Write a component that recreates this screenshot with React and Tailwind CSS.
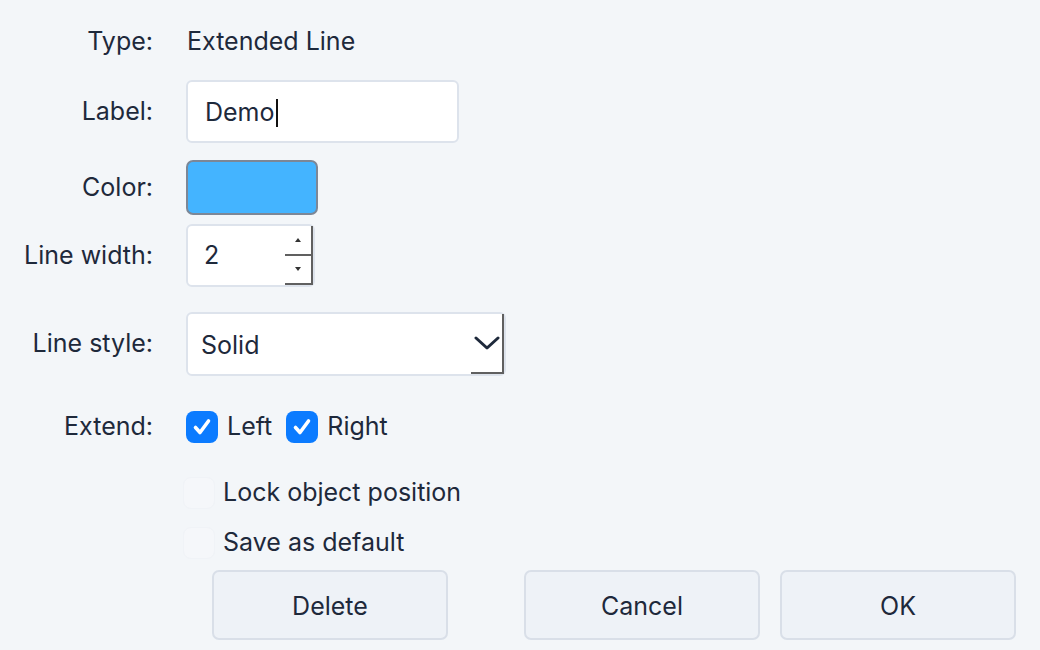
import React from 'react';

function CheckBox({ checked }) {
  if (!checked) {
    return <span className="w-[32px] h-[32px] rounded-[8px] bg-[#f5f7fa] border border-[#f0f3f7] shrink-0" />;
  }
  return (
    <span className="w-[32px] h-[32px] rounded-[8px] bg-[#0b7bff] flex items-center justify-center shrink-0">
      <svg width="20" height="20" viewBox="0 0 20 20" fill="none">
        <path d="M3.5 10.5 L8 15.5 L16.5 4" stroke="white" strokeWidth="3.6" strokeLinecap="round" strokeLinejoin="round" />
      </svg>
    </span>
  );
}

function Row({ label, className, children }) {
  return (
    <div className={`flex items-center ${className}`}>
      <div className="w-[153px] text-right shrink-0">{label}</div>
      <div className="ml-[33px] flex items-center">{children}</div>
    </div>
  );
}

export default function App() {
  return (
    <div
      className="w-[1040px] h-[650px] bg-[#f3f6f9] text-[#1e293b] text-[25px] overflow-hidden"
      style={{ fontFamily: 'Inter, "Noto Sans", sans-serif' }}
    >
      <div className="flex flex-col pt-[24px]">
        {/* Type */}
        <Row label="Type:" className="h-[36px]">
          <span className="ml-[1px]">Extended Line</span>
        </Row>

        {/* Label */}
        <Row label="Label:" className="mt-[20px] h-[63px]">
          <div className="w-[273px] h-[63px] bg-white border-2 border-[#dde3ec] rounded-[6px] flex items-center pl-[17px] pt-[2px]">
            <span>Demo</span>
            <span className="w-[2px] h-[28px] bg-[#111] ml-[1px]" />
          </div>
        </Row>

        {/* Color */}
        <Row label="Color:" className="mt-[17px] h-[55px]">
          <div className="w-[132px] h-[55px] bg-[#44b4ff] border-2 border-[#7c8797] rounded-[7px]" />
        </Row>

        {/* Line width */}
        <Row label="Line width:" className="mt-[9px] h-[63px]">
          <div className="w-[129px] h-[63px] bg-white border-2 border-[#dde3ec] rounded-[6px] flex">
            <span className="flex-1 flex items-center pl-[16px]">2</span>
            <div className="w-[28px] flex flex-col">
              <div className="flex-1 border-r-2 border-b-2 border-[#606060] flex items-center justify-center">
                <svg width="6" height="4" viewBox="0 0 6 4"><path d="M3 0 L6 4 L0 4 Z" fill="#333" /></svg>
              </div>
              <div className="flex-1 border-r-2 border-b-2 border-[#606060] flex items-center justify-center">
                <svg width="6" height="4" viewBox="0 0 6 4"><path d="M0 0 L6 0 L3 4 Z" fill="#333" /></svg>
              </div>
            </div>
          </div>
        </Row>

        {/* Line style */}
        <Row label="Line style:" className="mt-[25px] h-[64px]">
          <div className="w-[320px] h-[64px] bg-white border-2 border-[#dde3ec] rounded-[6px] flex">
            <span className="flex-1 flex items-center pl-[13px] pt-[3px]">Solid</span>
            <div className="w-[33px] border-r-2 border-b-2 border-[#606060] flex items-center justify-center">
              <svg width="26" height="16" viewBox="0 0 26 16" fill="none">
                <path d="M2 3 L13 13 L24 3" stroke="#1e293b" strokeWidth="3" strokeLinecap="round" strokeLinejoin="round" />
              </svg>
            </div>
          </div>
        </Row>

        {/* Extend */}
        <Row label="Extend:" className="mt-[35px] h-[32px]">
          <CheckBox checked />
          <span className="ml-[9px]">Left</span>
          <span className="ml-[14px]"><CheckBox checked /></span>
          <span className="ml-[9px]">Right</span>
        </Row>

        {/* Lock */}
        <div className="mt-[30px] h-[40px] flex items-center pl-[183px]">
          <CheckBox />
          <span className="ml-[8px]">Lock object position</span>
        </div>

        {/* Save as default */}
        <div className="mt-[10px] h-[40px] flex items-center pl-[183px]">
          <CheckBox />
          <span className="ml-[8px]">Save as default</span>
        </div>

        {/* Buttons */}
        <div className="mt-[7px] flex pl-[212px]">
          <button className="w-[236px] h-[70px] pt-[4px] bg-[#eef2f7] border-2 border-[#d9dfe8] rounded-[7px]">Delete</button>
          <button className="ml-[76px] w-[236px] h-[70px] pt-[4px] bg-[#eef2f7] border-2 border-[#d9dfe8] rounded-[7px]">Cancel</button>
          <button className="ml-[20px] w-[236px] h-[70px] pt-[4px] bg-[#eef2f7] border-2 border-[#d9dfe8] rounded-[7px]">OK</button>
        </div>
      </div>
    </div>
  );
}
